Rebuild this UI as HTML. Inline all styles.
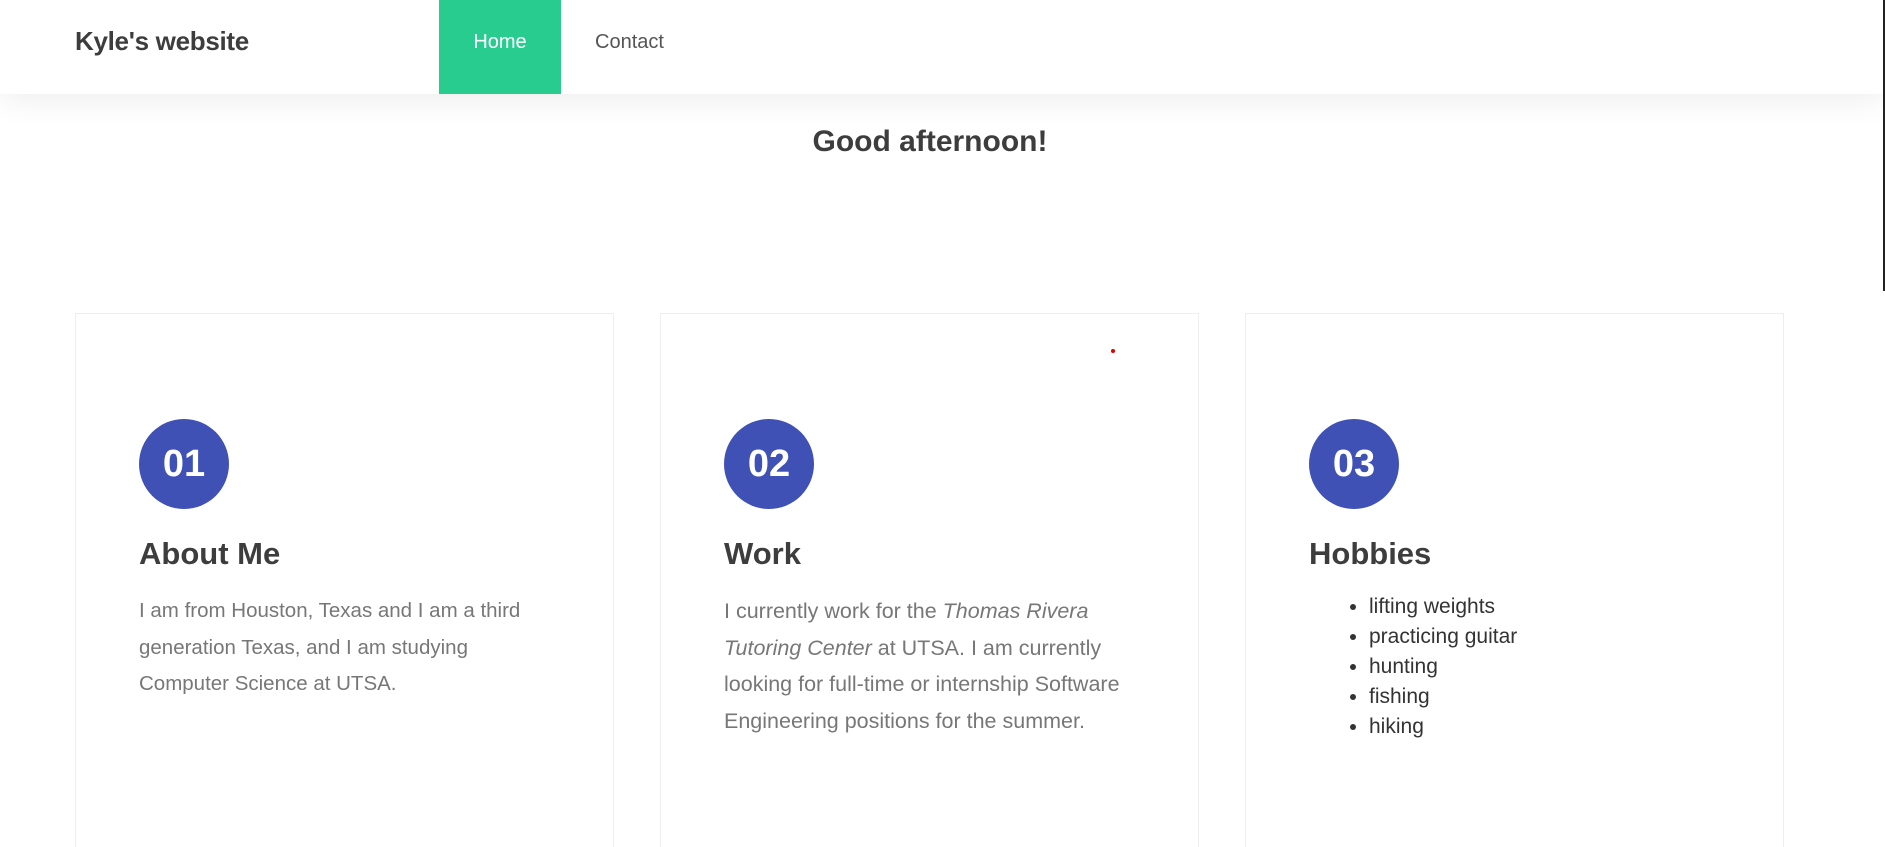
<!DOCTYPE html>
<html><head><meta charset="utf-8"><style>
*{margin:0;padding:0;box-sizing:border-box}
html,body{width:1885px;height:847px;overflow:hidden}
body{background:#fff;font-family:"Liberation Sans",sans-serif;position:relative}
.hdr{position:absolute;left:0;top:0;width:1885px;height:94px;background:#fff;box-shadow:0 6px 30px rgba(0,0,0,0.07);z-index:2}
.logo{position:absolute;left:75px;top:26px;font-size:26px;font-weight:bold;color:#3d3d3d;letter-spacing:-0.3px}
.home{position:absolute;left:439px;top:0;width:122px;height:94px;background:#29cc8f;color:#fff;font-size:20px;line-height:84px;text-align:center}
.contact{position:absolute;left:595px;top:0;line-height:84px;font-size:20px;color:#555}
.greet{position:absolute;left:0;width:1860px;top:125px;text-align:center;font-size:30px;font-weight:bold;color:#3d3d3d}
.card{position:absolute;top:313px;width:539px;height:534px;border:1px solid #eee;border-bottom:none}
.circ{position:absolute;left:63px;top:105px;width:90px;height:90px;border-radius:50%;background:#3f51b5;color:#fff;font-size:38px;font-weight:bold;text-align:center;line-height:90px}
.h{position:absolute;left:63px;top:222px;font-size:31px;font-weight:bold;color:#3d3d3d}
.p{position:absolute;left:63px;top:279px;font-size:20.5px;line-height:36.5px;color:#777;white-space:nowrap}
ul{position:absolute;top:278px;font-size:21px;line-height:30px;color:#333}
.sb{position:absolute;left:1883px;top:0;width:2px;height:291px;background:#222;z-index:3}
</style></head><body>
<div class="hdr"><div class="logo">Kyle's website</div><div class="home">Home</div><div class="contact">Contact</div></div>
<div class="sb"></div>
<div class="greet">Good afternoon!</div>
<div class="card" style="left:75px"><div class="circ">01</div><div class="h">About Me</div>
<div class="p">I am from Houston, Texas and I am a third<br>generation Texas, and I am studying<br>Computer Science at UTSA.</div></div>
<div class="card" style="left:660px"><div style="position:absolute;left:450px;top:35px;width:4px;height:4px;border-radius:50%;background:#d00"></div><div class="circ">02</div><div class="h">Work</div>
<div class="p" style="font-size:21.5px">I currently work for the <i>Thomas Rivera</i><br><i>Tutoring Center</i> at UTSA. I am currently<br>looking for full-time or internship Software<br>Engineering positions for the summer.</div></div>
<div class="card" style="left:1245px"><div class="circ">03</div><div class="h">Hobbies</div>
<ul style="left:123px;padding-left:0;list-style-position:outside;margin-left:0"><li>lifting weights</li><li>practicing guitar</li><li>hunting</li><li>fishing</li><li>hiking</li></ul></div>
</body></html>
